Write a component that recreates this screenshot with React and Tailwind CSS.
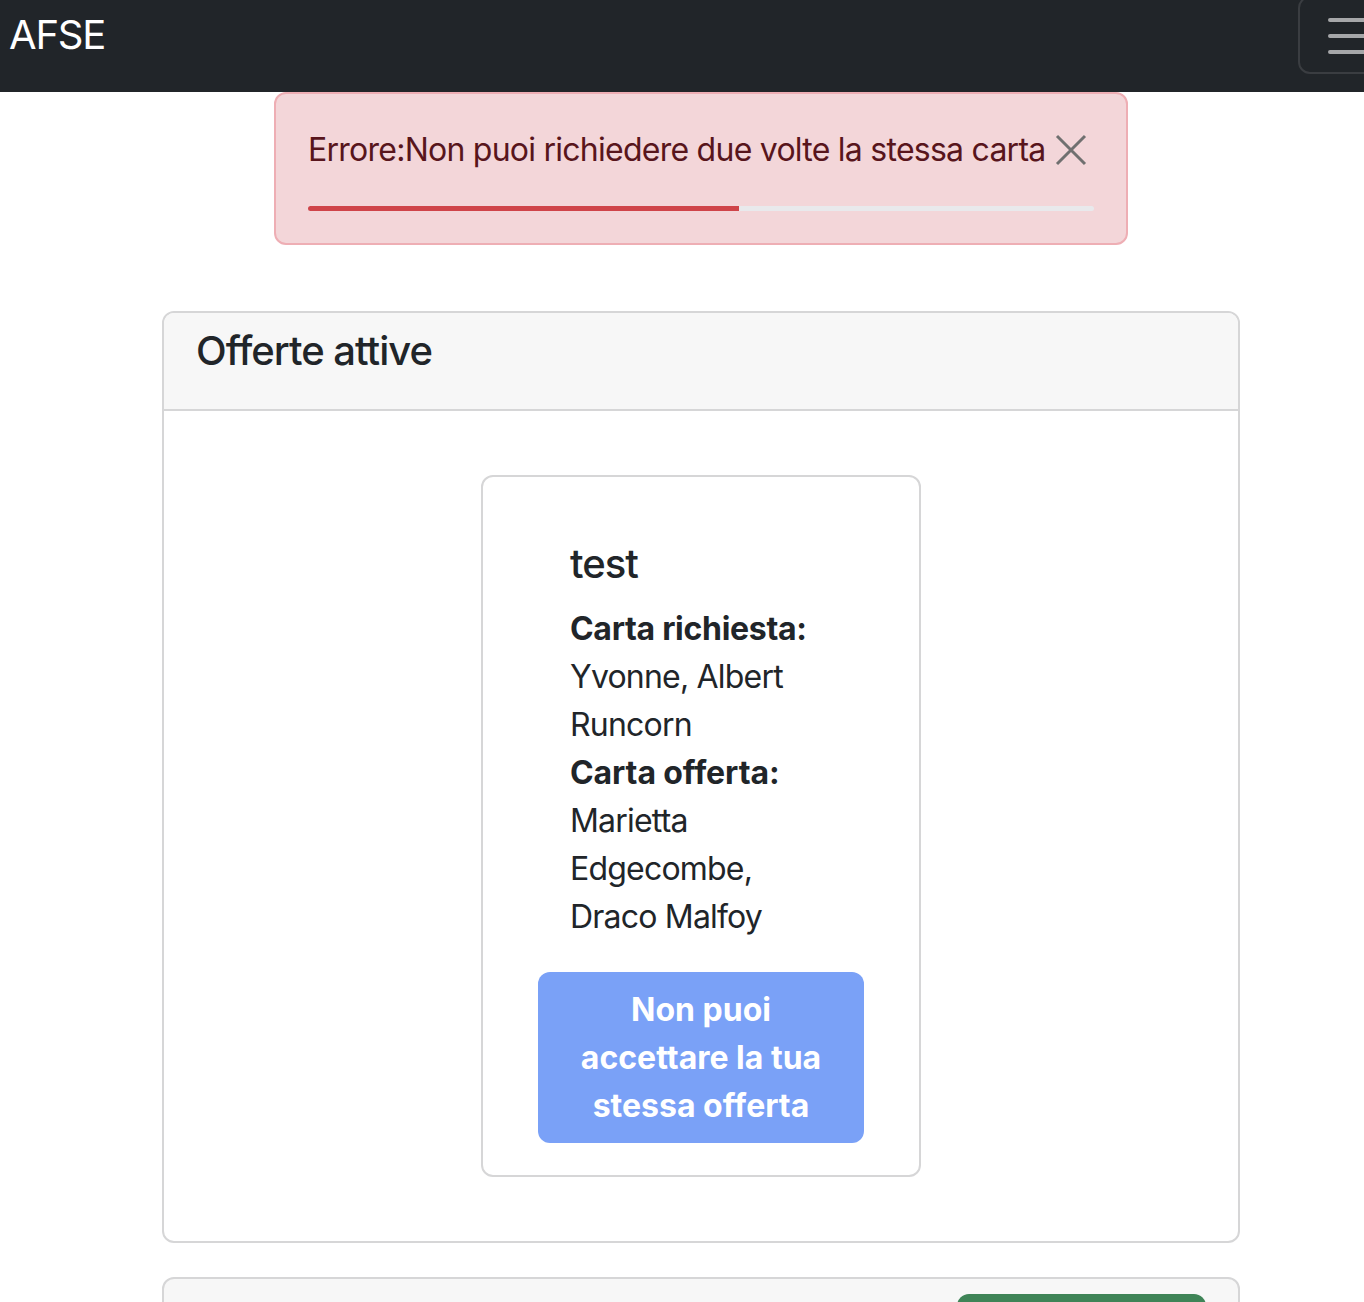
export default function App() {
  const font = { fontFamily: 'Inter, "Noto Sans", sans-serif' };
  return (
    <div className="w-[1364px] h-[1302px] overflow-hidden bg-white" style={font}>
      <div className="w-[1402px]">
        {/* Navbar */}
        <div className="h-[92px] bg-[#212529] flex items-start justify-between">
          <div className="pl-[9px] pt-[11px] text-[40px] leading-[48px] text-white tracking-[-1.2px]">AFSE</div>
          <div className="mt-[-4px] w-[104px] h-[78px] border-2 border-[#3a3d41] rounded-[12px] relative">
            <svg className="absolute left-[22px] top-[8px]" width="60" height="60" viewBox="0 0 30 30">
              <path d="M4 7h22M4 15h22M4 23h22" stroke="#a6a7a9" strokeWidth="2" strokeLinecap="round" fill="none" />
            </svg>
          </div>
        </div>

        {/* Alert */}
        <div className="mx-auto w-[854px] h-[153px] border-2 border-[#eeaeb4] bg-[#f3d6d9] rounded-[12px] pt-[32px] px-[32px]">
          <div className="flex items-center justify-between">
            <span className="text-[32px] leading-[48px] text-[#58151c] whitespace-nowrap tracking-[-0.75px]">Errore:Non puoi richiedere due volte la stessa carta</span>
            <svg className="mr-[7px] shrink-0" width="32" height="32" viewBox="0 0 32 32">
              <path d="M2 2L30 30M30 2L2 30" stroke="#707070" strokeWidth="3" fill="none" />
            </svg>
          </div>
          <div className="mt-[32px] h-[5px] rounded-full bg-[#e9e9ec] overflow-hidden flex">
            <div className="h-full bg-[#cf4449] w-[431px]"></div>
          </div>
        </div>

        {/* Offerte attive card */}
        <div className="mt-[66px] mx-[162px] border-2 border-[#d6d6d7] rounded-[12px] overflow-hidden">
          <div className="bg-[#f7f7f7] border-b-2 border-[#d6d6d7] pt-[14px] pb-[34px] px-[32px]">
            <div className="text-[40px] leading-[48px] text-[#212529] font-medium tracking-[-1px]">Offerte attive</div>
          </div>
          <div className="pt-[64px] pb-[64px] flex justify-center">
            <div className="w-[440px] border-2 border-[#d6d6d7] rounded-[12px] pt-[63px] pb-[32px]">
              <div className="pl-[87px] text-[#212529]">
                <div className="text-[40px] leading-[48px] font-medium mb-[17px] tracking-[-1px]">test</div>
                <div className="text-[32px] leading-[48px] tracking-[-0.8px]">
                  <div className="font-bold tracking-[-0.3px]">Carta richiesta:</div>
                  <div>Yvonne, Albert</div>
                  <div>Runcorn</div>
                  <div className="font-bold tracking-[-0.1px]">Carta offerta:</div>
                  <div>Marietta</div>
                  <div>Edgecombe,</div>
                  <div>Draco Malfoy</div>
                </div>
              </div>
              <div className="mt-[31px] flex justify-center">
                <div className="w-[326px] h-[171px] bg-[#7aa1f7] rounded-[12px] flex items-center justify-center text-center text-white font-bold text-[32px] leading-[48px] px-[24px]">
                  Non puoi accettare la tua stessa offerta
                </div>
              </div>
            </div>
          </div>
        </div>

        {/* Next card */}
        <div className="mt-[34px] mx-[162px] h-[200px] border-2 border-[#d6d6d7] rounded-[12px] bg-[#f7f7f7] pt-[15px] flex justify-end pr-[32px]">
          <div className="w-[249px] h-[80px] bg-[#3f8457] rounded-[12px]"></div>
        </div>
      </div>
    </div>
  );
}
